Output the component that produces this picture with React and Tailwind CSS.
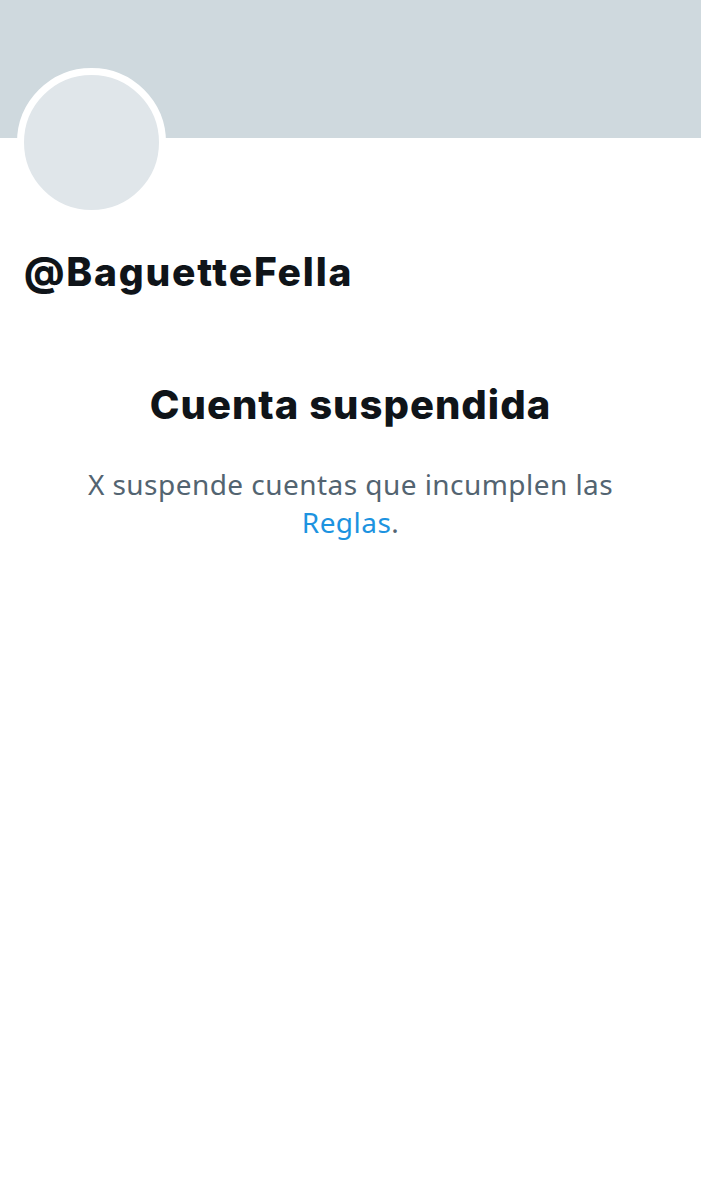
export default function App() {
  return (
    <div className="min-h-[1200px] w-full bg-white font-['Inter',sans-serif] text-[#0f1419]">
      {/* banner */}
      <div className="h-[138px] w-full bg-[#cfd9de]" />

      {/* avatar */}
      <div className="-mt-[70px] ml-[17px] h-[149px] w-[149px] rounded-full border-[7px] border-white bg-[#e0e6ea]" />

      <h1 className="mt-[30px] px-[24px] text-[39px] font-extrabold leading-[50px] tracking-[1.8px]">
        @BaguetteFella
      </h1>

      <div className="mt-[82px] flex flex-col items-center px-[40px] text-center">
        <h2 className="text-[40px] font-extrabold leading-[52px] tracking-[1px]">
          Cuenta suspendida
        </h2>
        <p className="mt-[34px] max-w-[600px] font-['Noto_Sans',sans-serif] text-[28px] leading-[38px] tracking-[0.45px] text-[#536471]">
          X suspende cuentas que incumplen las{" "}
          <a href="#" className="text-[#1d93e0]">
            Reglas
          </a>
          .
        </p>
      </div>
    </div>
  );
}
